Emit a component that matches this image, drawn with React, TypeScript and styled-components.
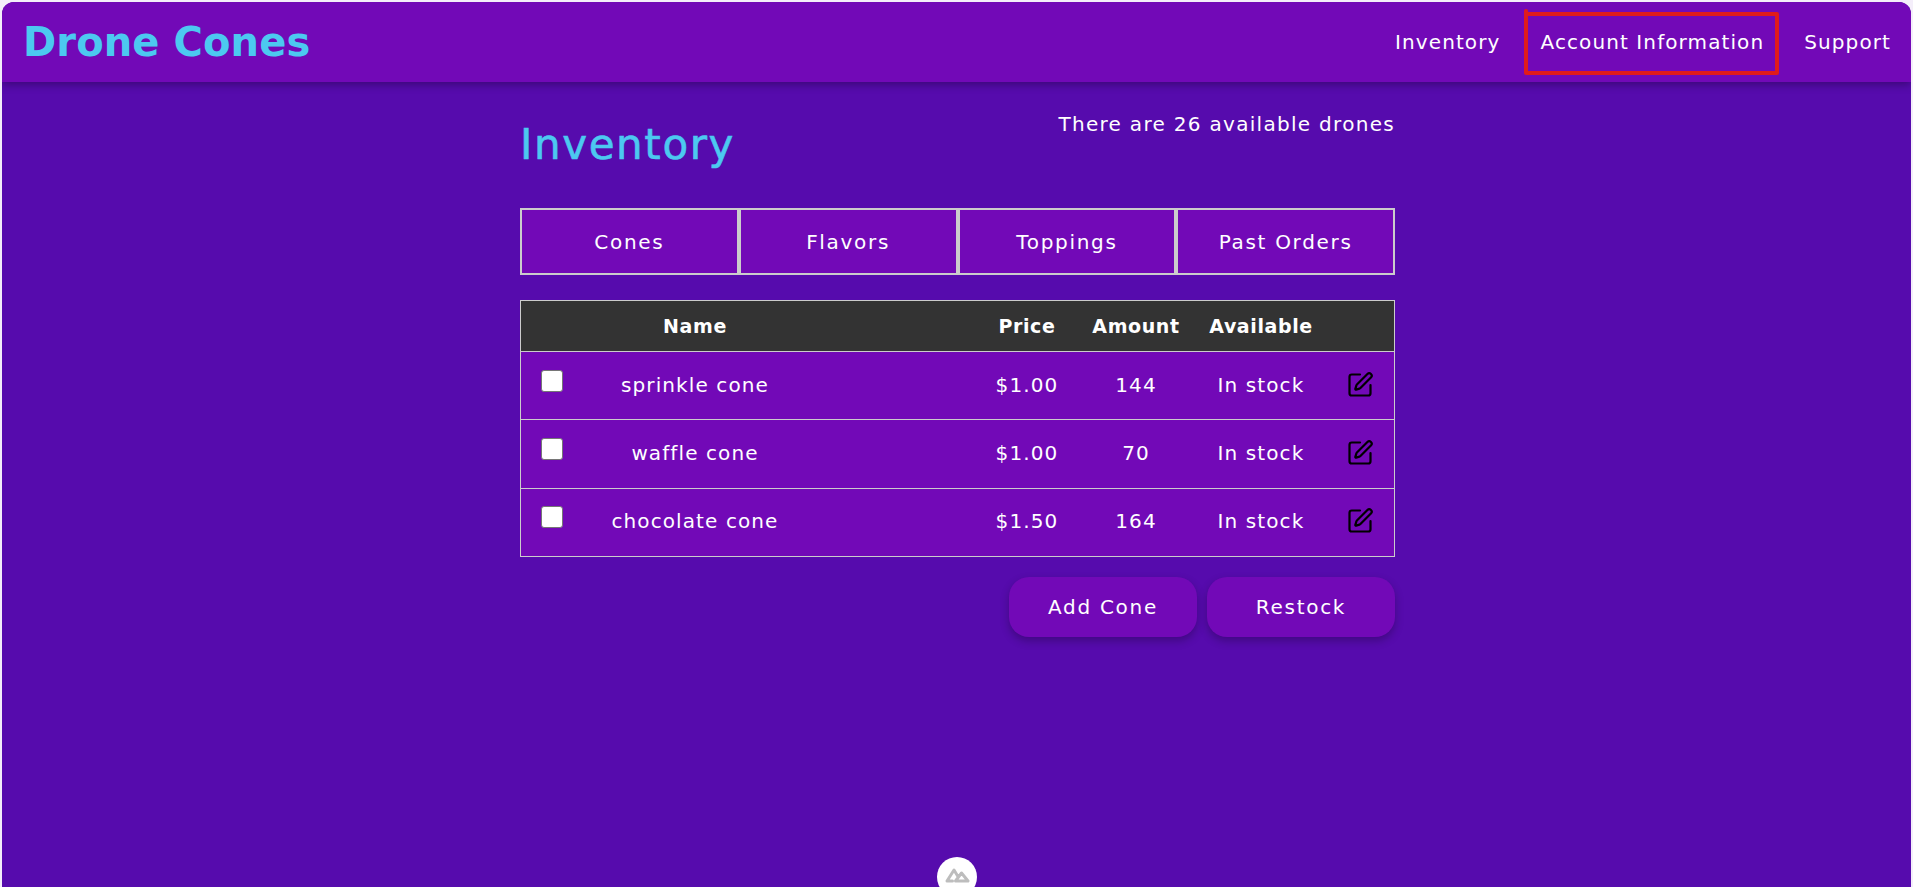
import * as React from 'react';
import styled, { createGlobalStyle } from 'styled-components';
import { SquarePen } from 'lucide-react';

const GlobalStyle = createGlobalStyle`
  html, body {
    margin: 0;
    padding: 0;
    height: 100%;
    background: #f4eefa;
  }
  * {
    box-sizing: border-box;
  }
  #root {
    height: 100%;
    padding: 2px 2px 0;
    overflow: hidden;
  }
`;

const Page = styled.div`
  position: relative;
  height: 885px;
  overflow: hidden;
  border-radius: 12px 12px 0 0;
  background: #560bad;
  color: #fff;
  font-family: 'DejaVu Sans', sans-serif;
`;

const Header = styled.header`
  display: flex;
  align-items: center;
  justify-content: space-between;
  height: 80px;
  padding: 0 20px 0 21px;
  background: #7209b7;
  box-shadow: 0 3px 8px rgba(0, 0, 0, 0.3);
`;

const Logo = styled.div`
  font-size: 40px;
  font-weight: 700;
  letter-spacing: 0.1px;
  color: #4cc9f0;
`;

const Nav = styled.nav`
  display: flex;
  gap: 40px;
`;

const NavLink = styled.a`
  position: relative;
  font-size: 20px;
  letter-spacing: 1.1px;
  color: #fff;
  white-space: nowrap;
`;

const Highlight = styled.span`
  position: absolute;
  left: -16px;
  top: -18px;
  width: 255px;
  height: 63px;
  border: 4px solid #e01b1b;
  border-radius: 2px;

  &::before {
    content: '';
    position: absolute;
    left: -4px;
    top: -7px;
    width: 4px;
    height: 10px;
    border-radius: 2px;
    background: #e01b1b;
  }
`;

const Main = styled.main`
  width: 875px;
  margin-left: 518px;
  padding-top: 24px;
`;

const TitleRow = styled.div`
  display: flex;
  justify-content: space-between;
  align-items: flex-start;
  height: 102px;
`;

const Title = styled.h1`
  margin: 14px 0 0;
  font-size: 42px;
  font-weight: 400;
  line-height: 50px;
  letter-spacing: 1.6px;
  color: #4cc9f0;
  -webkit-text-stroke: 0.6px #4cc9f0;
`;

const DroneCount = styled.div`
  margin-top: 6px;
  font-size: 20px;
  line-height: 24px;
  letter-spacing: 1.3px;
`;

const Tabs = styled.div`
  display: grid;
  grid-template-columns: repeat(4, 1fr);
  height: 67px;
`;

const Tab = styled.button`
  border: 2px solid #ccc;
  background: #7209b7;
  color: #fff;
  font-family: inherit;
  font-size: 20px;
  letter-spacing: 1.7px;
`;

const Table = styled.div`
  margin-top: 25px;
  border: 1px solid #ccc;
  border-bottom: 0;
`;

const Row = styled.div<{ $head?: boolean }>`
  display: grid;
  grid-template-columns: 49px 412px 90px 128px 122px 1fr;
  align-items: center;
  height: ${({ $head }) => ($head ? '51px' : '68.4px')};
  padding-bottom: ${({ $head }) => ($head ? '0' : '2px')};
  border-bottom: 1px solid #ccc;
  background: ${({ $head }) => ($head ? '#333' : '#7209b7')};
  font-size: ${({ $head }) => ($head ? '19px' : '20px')};
  font-weight: ${({ $head }) => ($head ? 700 : 400)};
  letter-spacing: ${({ $head }) => ($head ? '0.6px' : '1.1px')};
`;

const Cell = styled.div`
  text-align: center;
  white-space: nowrap;
`;

const NameCell = styled(Cell)`
  padding-right: 162px;
`;

const Check = styled.input`
  appearance: none;
  display: block;
  width: 22px;
  height: 22px;
  margin: -8px 0 0 20px;
  border: 1px solid #767676;
  border-radius: 3px;
  background: #fff;
`;

const EditCell = styled(Cell)`
  display: flex;
  justify-content: center;
  margin: 0 0 0 4px;
  color: #000;
`;

const Actions = styled.div`
  display: flex;
  justify-content: flex-end;
  gap: 10px;
  margin-top: 20px;
`;

const ActionButton = styled.button`
  width: 188px;
  height: 60px;
  border: 0;
  border-radius: 20px;
  background: #7209b7;
  color: #fff;
  font-family: inherit;
  font-size: 20px;
  letter-spacing: 1.7px;
  box-shadow: 0 4px 8px rgba(0, 0, 0, 0.25);
`;

const Badge = styled.div`
  position: absolute;
  left: 935px;
  top: 855px;
  display: flex;
  justify-content: center;
  width: 40px;
  height: 40px;
  padding-top: 11px;
  border-radius: 50%;
  background: #fff;
`;

const cones = [
  { name: 'sprinkle cone', price: '$1.00', amount: 144 },
  { name: 'waffle cone', price: '$1.00', amount: 70 },
  { name: 'chocolate cone', price: '$1.50', amount: 164 },
];

export default function App() {
  return (
    <Page>
      <GlobalStyle />
      <Header>
        <Logo>Drone Cones</Logo>
        <Nav>
          <NavLink>Inventory</NavLink>
          <NavLink>
            Account Information
            <Highlight />
          </NavLink>
          <NavLink>Support</NavLink>
        </Nav>
      </Header>
      <Main>
        <TitleRow>
          <Title>Inventory</Title>
          <DroneCount>There are 26 available drones</DroneCount>
        </TitleRow>
        <Tabs>
          <Tab>Cones</Tab>
          <Tab>Flavors</Tab>
          <Tab>Toppings</Tab>
          <Tab>Past Orders</Tab>
        </Tabs>
        <Table>
          <Row $head>
            <Cell />
            <NameCell>Name</NameCell>
            <Cell>Price</Cell>
            <Cell>Amount</Cell>
            <Cell>Available</Cell>
            <Cell />
          </Row>
          {cones.map((cone) => (
            <Row key={cone.name}>
              <Cell>
                <Check type='checkbox' />
              </Cell>
              <NameCell>{cone.name}</NameCell>
              <Cell>{cone.price}</Cell>
              <Cell>{cone.amount}</Cell>
              <Cell>In stock</Cell>
              <EditCell>
                <SquarePen size={28} strokeWidth={1.9} />
              </EditCell>
            </Row>
          ))}
        </Table>
        <Actions>
          <ActionButton>Add Cone</ActionButton>
          <ActionButton>Restock</ActionButton>
        </Actions>
      </Main>
      <Badge>
        <svg width='25' height='15' viewBox='0 0 25 15' fill='none' stroke='#bdbdbd' strokeWidth='3' strokeLinejoin='round' strokeLinecap='round'>
          <path d='M7.5 13H2L9 2l3.8 6.3M10.5 13L16.5 5L23 13Z' />
        </svg>
      </Badge>
    </Page>
  );
}
